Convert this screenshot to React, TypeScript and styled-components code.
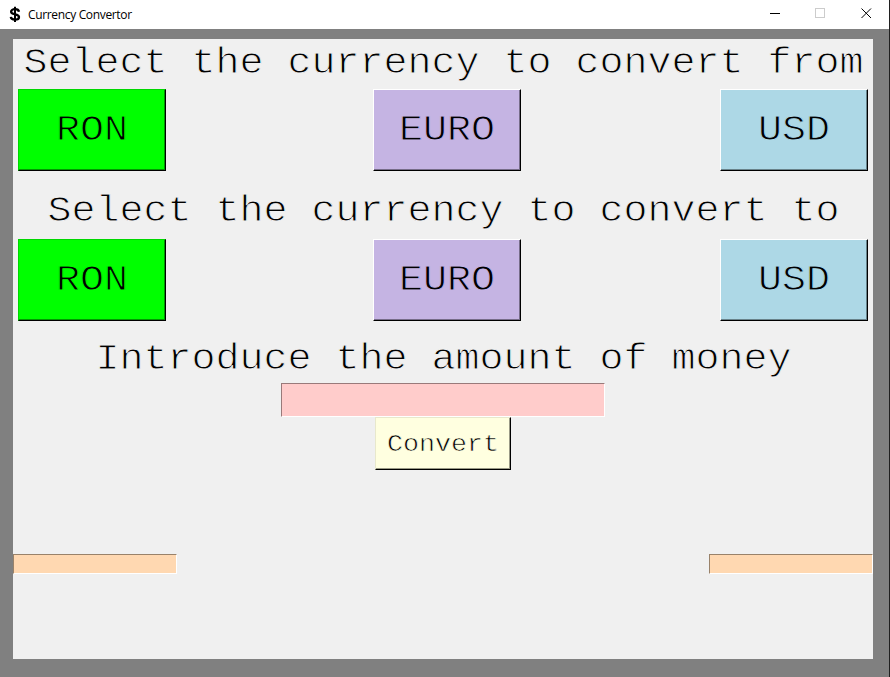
import React from "react";
import styled, { createGlobalStyle } from "styled-components";

const GlobalStyle = createGlobalStyle`
  * { box-sizing: border-box; }
  body { margin: 0; background: #808080; }
  button, input { font: inherit; margin: 0; padding: 0; border-radius: 0; outline: none; }
`;

const Window = styled.div`
  display: flex;
  flex-direction: column;
  width: 890px;
  height: 677px;
  overflow: hidden;
  background: #808080;
  border-right: 1px solid #202020;
`;

const TitleBar = styled.header`
  display: flex;
  align-items: center;
  flex: none;
  height: 29px;
  padding: 0 17px 0 9px;
  background: #fff;
`;

const Title = styled.span`
  flex: 1;
  margin-left: 7px;
  font: 12px/18px "Open Sans", "Noto Sans", sans-serif;
  letter-spacing: -0.34px;
  color: #000;
`;

const Controls = styled.div`
  display: flex;
  gap: 35px;
  padding-bottom: 3px;

  svg { display: block; }
`;

const Panel = styled.main`
  display: flex;
  flex-direction: column;
  align-items: center;
  width: 860px;
  height: 620px;
  margin: 10px 0 0 13px;
  background: #f0f0f0;
  color: #000;
  font: 40px "Liberation Mono", "Courier New", monospace;
`;

/* Flattened letters with a face-coloured outline give a light typewriter weight. */
const Lettering = styled.span<{ $face: string; $thin?: number }>`
  display: inline-block;
  transform: scaleY(0.92);
  transform-origin: 50% 72%;
  -webkit-text-stroke: ${(p) => p.$thin ?? 1}px ${(p) => p.$face};
`;

const Heading = styled.h1<{ $height: number; $top?: number }>`
  flex: none;
  height: ${(p) => p.$height}px;
  margin: ${(p) => p.$top ?? 0}px 0 0;
  padding-left: 1px;
  font: inherit;
  line-height: 48px;
  white-space: pre;
`;

const CurrencyRow = styled.div`
  display: grid;
  grid-template-columns: 355px 347px 148px;
  width: 850px;
  height: 82px;
`;

type Shade = { $face: string; $light: string; $dark: string };

const RaisedButton = styled.button<Shade>`
  width: 148px;
  height: 82px;
  border: 1px solid;
  border-color: ${(p) => p.$light} #000 #000 ${(p) => p.$light};
  box-shadow: inset -1px -1px ${(p) => p.$dark};
  background: ${(p) => p.$face};
  color: #000;
  line-height: 48px;
`;

const ConvertButton = styled(RaisedButton)`
  flex: none;
  width: 136px;
  height: 53px;
  font-size: 26.667px;
  line-height: 30px;
`;

const SunkenField = styled.input<{ $face: string; $dark: string }>`
  display: block;
  width: 164px;
  height: 20px;
  border: 1px solid;
  border-color: ${(p) => p.$dark} #fff #fff ${(p) => p.$dark};
  background: ${(p) => p.$face};
  font-size: 13px;
`;

const AmountField = styled(SunkenField)`
  flex: none;
  width: 324px;
  height: 34px;
  font-size: 26.667px;
`;

const Results = styled.div`
  display: flex;
  justify-content: space-between;
  width: 100%;
  margin-top: 84px;
`;

const currencies = [
  { name: "RON", face: "#00ff00", light: "#00d700", dark: "#009800" },
  { name: "EURO", face: "#c5b4e3", light: "#ffffff", dark: "#766c88" },
  { name: "USD", face: "#add8e6", light: "#ffffff", dark: "#68828a" },
];

const CurrencyButtons = () => (
  <CurrencyRow>
    {currencies.map((c) => (
      <RaisedButton key={c.name} $face={c.face} $light={c.light} $dark={c.dark}>
        <Lettering $face={c.face}>{c.name}</Lettering>
      </RaisedButton>
    ))}
  </CurrencyRow>
);

const DollarIcon = () => (
  <svg width="12" height="17" viewBox="0 0 12 17" fill="none" stroke="#000">
    <path d="M10 5.7C9.7 3.9 8.1 3.2 6 3.2C3.6 3.2 2.1 4.1 2.1 5.7C2.1 7.5 3.8 7.8 6 8.3C8.4 8.8 10 9.4 10 11C10 12.8 8.3 13.7 6 13.7C3.6 13.7 2 12.7 1.8 10.9" strokeWidth="2.3" />
    <path d="M6 0.8V16" strokeWidth="2" />
  </svg>
);

export default function App() {
  return (
    <>
      <GlobalStyle />
      <Window>
        <TitleBar>
          <DollarIcon />
          <Title>Currency Convertor</Title>
          <Controls>
            <svg width="11" height="11" shapeRendering="crispEdges">
              <path d="M1 5.5H11" stroke="#000" />
            </svg>
            <svg width="11" height="11" shapeRendering="crispEdges">
              <rect x="0.5" y="0.5" width="9" height="9" fill="none" stroke="#ccc" />
            </svg>
            <svg width="11" height="11">
              <path d="M0.5 0.5L10 10M10 0.5L0.5 10" stroke="#000" strokeWidth="1" />
            </svg>
          </Controls>
        </TitleBar>
        <Panel>
          <Heading $height={50}>
            <Lettering $face="#f0f0f0">Select the currency to convert from</Lettering>
          </Heading>
          <CurrencyButtons />
          <Heading $height={52} $top={16}>
            <Lettering $face="#f0f0f0">Select the currency to convert to</Lettering>
          </Heading>
          <CurrencyButtons />
          <Heading $height={48} $top={14}>
            <Lettering $face="#f0f0f0">Introduce the amount of money</Lettering>
          </Heading>
          <AmountField $face="#ffcccb" $dark="#997a7a" aria-label="Amount" />
          <ConvertButton $face="#ffffe0" $light="#e8e8cc" $dark="#999986">
            <Lettering $face="#ffffe0" $thin={0.7}>Convert</Lettering>
          </ConvertButton>
          <Results>
            <SunkenField $face="#ffd8b1" $dark="#99826a" readOnly aria-label="Source amount" />
            <SunkenField $face="#ffd8b1" $dark="#99826a" readOnly aria-label="Converted amount" />
          </Results>
        </Panel>
      </Window>
    </>
  );
}
